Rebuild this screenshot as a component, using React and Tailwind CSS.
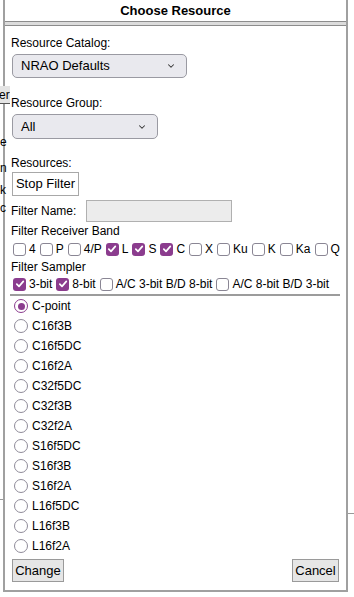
import { ChevronDown } from 'lucide-react';

const BANDS = [
  { name: '4', on: false },
  { name: 'P', on: false },
  { name: '4/P', on: false },
  { name: 'L', on: true },
  { name: 'S', on: true },
  { name: 'C', on: true },
  { name: 'X', on: false },
  { name: 'Ku', on: false },
  { name: 'K', on: false },
  { name: 'Ka', on: false },
  { name: 'Q', on: false },
];

const SAMPLERS = [
  { name: '3-bit', on: true },
  { name: '8-bit', on: true },
  { name: 'A/C 3-bit B/D 8-bit', on: false },
  { name: 'A/C 8-bit B/D 3-bit', on: false },
];

const RESOURCES = [
  'C-point', 'C16f3B', 'C16f5DC', 'C16f2A', 'C32f5DC', 'C32f3B', 'C32f2A',
  'S16f5DC', 'S16f3B', 'S16f2A', 'L16f5DC', 'L16f3B', 'L16f2A',
];

const Check = ({ on }) =>
  on ? (
    <span className="w-[13px] h-[13px] rounded-[3px] bg-[#8b3c8e] flex items-center justify-center shrink-0">
      <svg width="10" height="10" viewBox="0 0 10 10">
        <path d="M1.8 5.2 L4 7.4 L8.3 2.4" fill="none" stroke="white" strokeWidth="1.7" strokeLinecap="round" strokeLinejoin="round" />
      </svg>
    </span>
  ) : (
    <span className="w-[13px] h-[13px] rounded-[3px] border border-[#8a8694] bg-white shrink-0"></span>
  );

const Radio = ({ on }) =>
  on ? (
    <span className="w-[14px] h-[14px] rounded-full border-[1.5px] border-[#8b3c8e] flex items-center justify-center shrink-0">
      <span className="w-[7px] h-[7px] rounded-full bg-[#8b3c8e]"></span>
    </span>
  ) : (
    <span className="w-[14px] h-[14px] rounded-full border-[1.5px] border-[#8f8b99] bg-white shrink-0"></span>
  );

const Select = ({ value, width }) => (
  <div className={`${width} h-full ml-[1px] rounded-[5px] border border-[#9a9aa2] bg-[#e9e9ee] flex items-center justify-between pl-[8px] pr-[10px] text-[13px]`}>
    <span>{value}</span>
    <ChevronDown size={10} strokeWidth={2.5} className="text-[#333]" />
  </div>
);

export default function App() {
  return (
    <div className="relative w-[354px] h-[597px] bg-white overflow-hidden text-black font-['Liberation_Sans',Arial,sans-serif] text-[12px]">
      <div className="ml-[3px] w-[345px] h-[592px] border-x-2 border-b-2 border-[#a0a0a0] bg-white flex flex-col">
        <div className="h-[21px] flex items-center justify-center font-bold text-[13px]">Choose Resource</div>
        <div className="h-[5px] border-y border-[#8c8c8c] bg-[#dcdcdc]"></div>

        <div className="flex flex-col pl-[6px] pr-[5px] pt-[10px]">
          <div className="h-[15px] leading-[15px]">Resource Catalog:</div>
          <div className="mt-[3px] h-[24px]">
            <Select value="NRAO Defaults" width="w-[175px]" />
          </div>

          <div className="mt-[18px] h-[15px] leading-[15px]">Resource Group:</div>
          <div className="mt-[3px] h-[25px]">
            <Select value="All" width="w-[146px]" />
          </div>

          <div className="mt-[17px] h-[15px] leading-[15px]">Resources:</div>
          <div className="mt-[1px] h-[24px] flex">
            <button className="ml-[1px] w-[67px] h-full border border-[#a8a8a8] bg-white text-[13px]">Stop Filter</button>
          </div>

          <div className="mt-[4px] h-[22px] flex items-center gap-[10px]">
            <span>Filter Name:</span>
            <input className="w-[146px] h-full border border-[#b0b0b0] bg-[#ececec]" />
          </div>

          <div className="mt-[2px] h-[15px] leading-[15px]">Filter Receiver Band</div>
          <div className="h-[20px] flex items-center gap-[4px] pl-[2px]">
            {BANDS.map((b) => (
              <div key={b.name} className="flex items-center gap-[3px]">
                <Check on={b.on} />
                <span>{b.name}</span>
              </div>
            ))}
          </div>

          <div className="mt-[1px] h-[15px] leading-[15px]">Filter Sampler</div>
          <div className="h-[18px] flex items-center gap-[4px] pl-[2px]">
            {SAMPLERS.map((s) => (
              <div key={s.name} className="flex items-center gap-[3px]">
                <Check on={s.on} />
                <span>{s.name}</span>
              </div>
            ))}
          </div>

          <div className="mt-[1px] h-[2px] bg-[#9c9c9c] mr-[1px] -ml-[1px]"></div>

          <div className="flex flex-col">
            {RESOURCES.map((r, i) => (
              <div key={r} className="h-[20px] flex items-center gap-[4px] pl-[3px]">
                <Radio on={i === 0} />
                <span>{r}</span>
              </div>
            ))}
          </div>

          <div className="mt-[3px] h-[23px] flex justify-between pr-[2px]">
            <button className="ml-[1px] w-[52px] h-full border border-[#9a9a9a] bg-[#e6e6e6] text-[13px]">Change</button>
            <button className="w-[47px] h-full border border-[#9a9a9a] bg-[#e6e6e6] text-[13px]">Cancel</button>
          </div>
        </div>
      </div>

      {/* bits of the page behind the dialog */}
      <div className="absolute left-0 top-[86px] w-[10px] h-[18px] bg-[#e4e4e4] overflow-hidden border-b border-[#555] text-[12px] leading-[18px] whitespace-nowrap">
        <span className="-ml-[1px]">er</span>
      </div>
      <span className="absolute left-0 top-[135px] w-[9px] overflow-hidden text-[12px] leading-[14px]">e</span>
      <span className="absolute left-0 top-[161px] w-[9px] overflow-hidden text-[12px] leading-[14px]">n</span>
      <span className="absolute left-0 top-[183px] w-[9px] overflow-hidden text-[12px] leading-[14px]">k</span>
      <span className="absolute left-0 top-[201px] w-[9px] overflow-hidden text-[12px] leading-[14px]">c</span>
      <div className="absolute left-0 top-[499px] w-[3px] h-px bg-[#999]"></div>
      <div className="absolute right-0 top-[513px] w-[6px] h-px bg-[#999]"></div>
    </div>
  );
}
